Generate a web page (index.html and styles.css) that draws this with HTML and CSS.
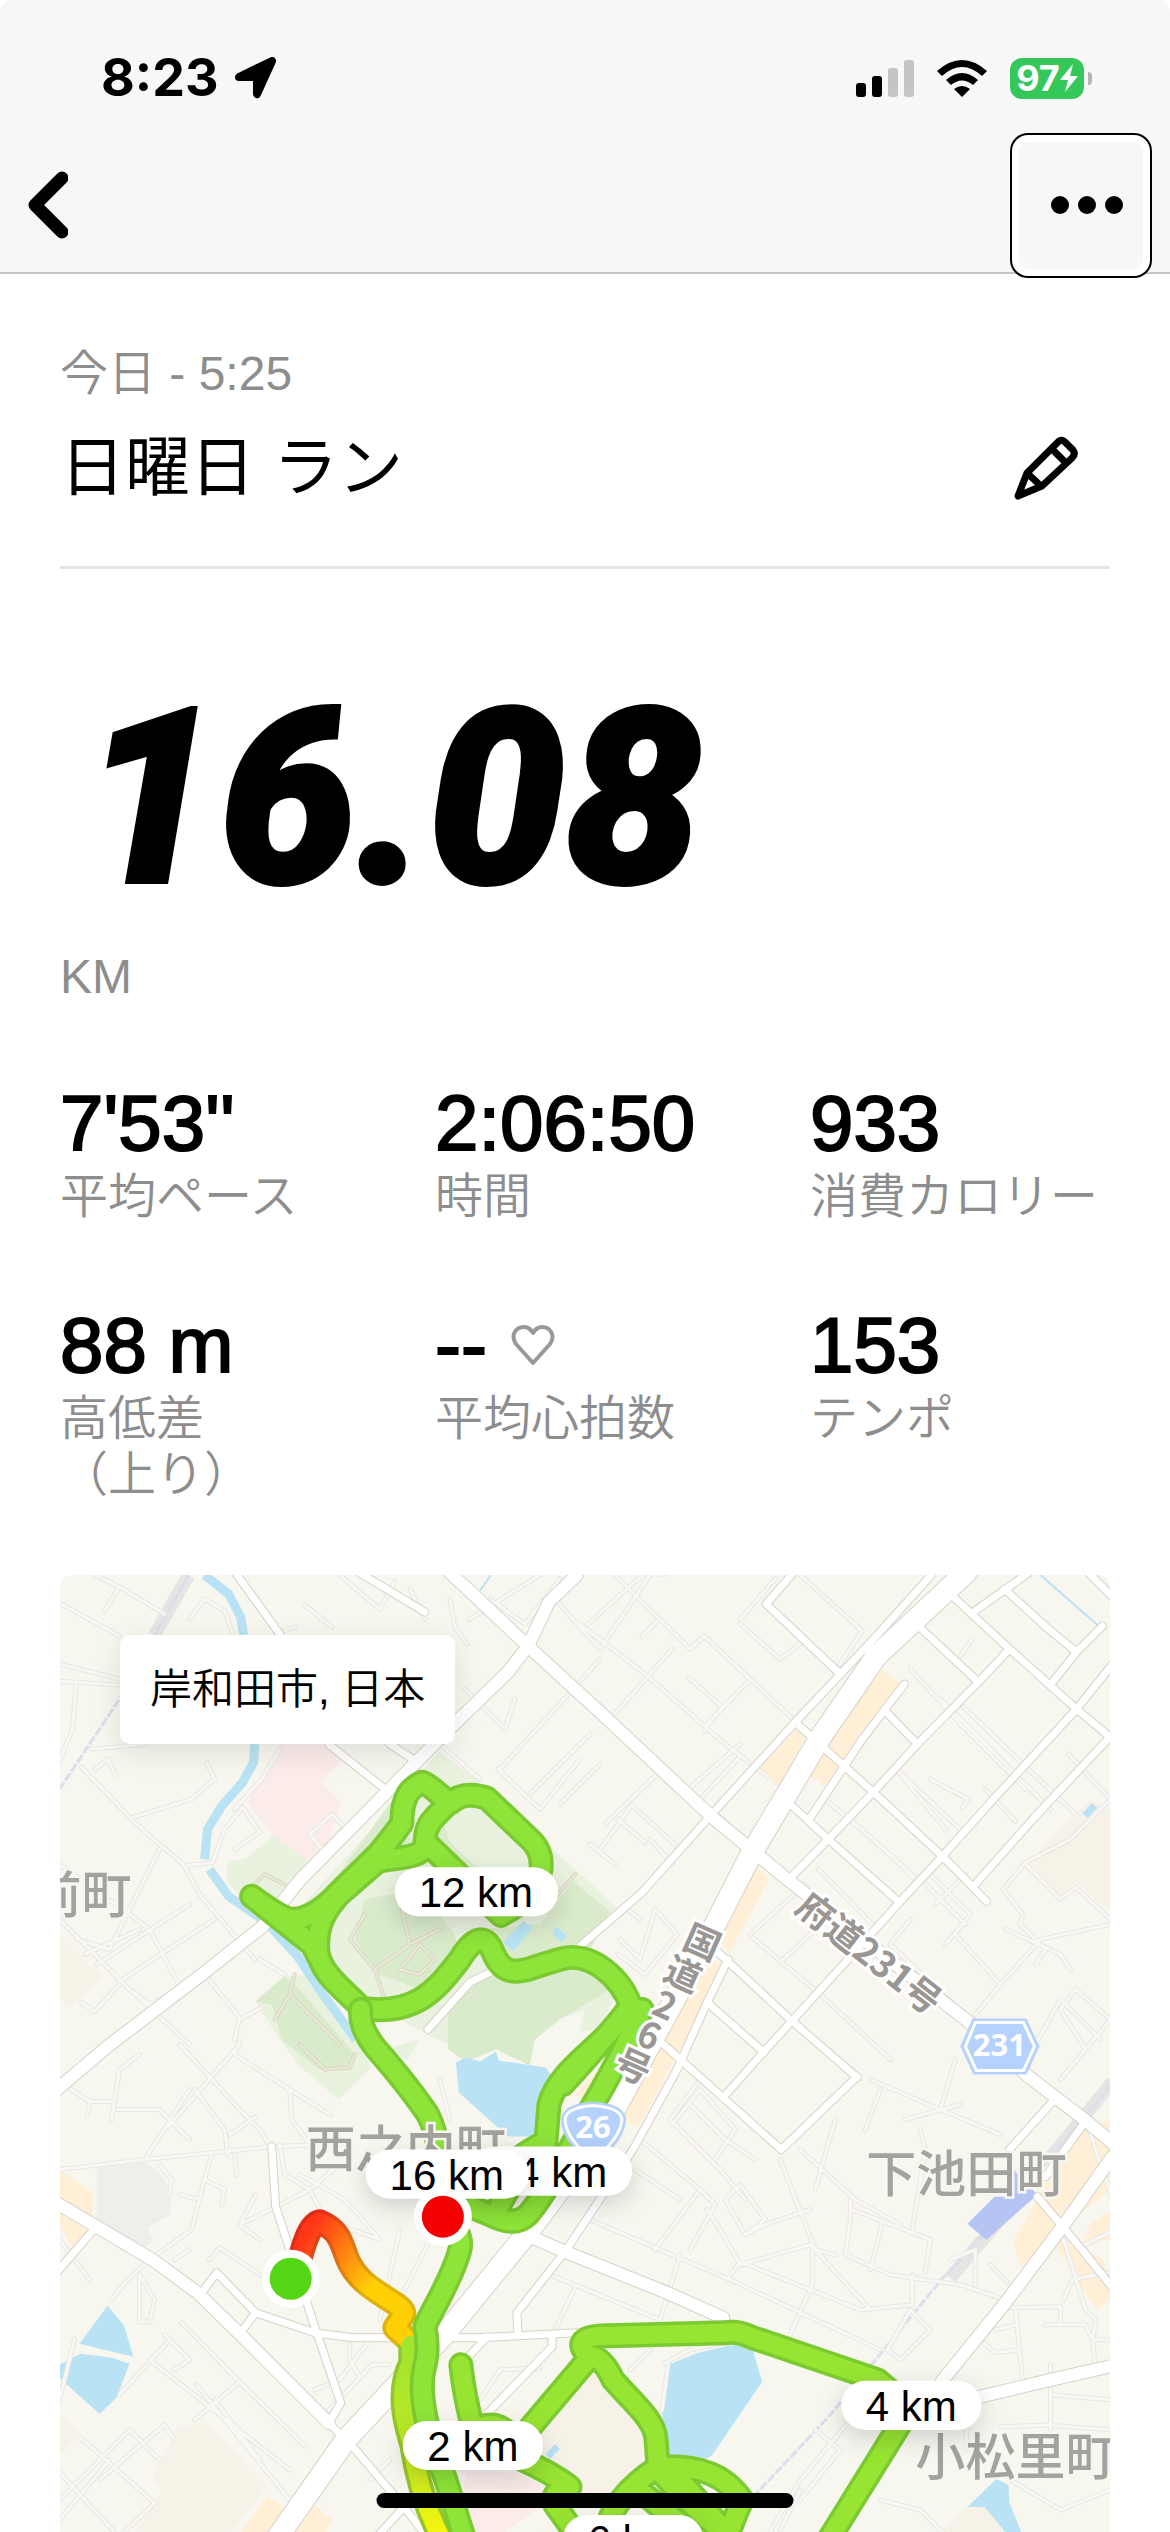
FILE: index.html
```
<!DOCTYPE html>
<html lang="ja">
<head>
  <meta charset="UTF-8">
  <meta name="viewport" content="width=device-width, initial-scale=1.0">
  <title>日曜日 ラン</title>
  <link rel="stylesheet" href="styles.css">
</head>
<body>
  <header class="header">
    <div class="status-bar">
      <div class="status-left">
        <span class="clock">8:23</span>
        <svg class="location-icon" viewBox="0 0 42 42"><path d="M4 20 L37 4 L22 37 V20 Z" fill="#000" stroke="#000" stroke-width="8" stroke-linejoin="round"/></svg>
      </div>
      <div class="status-right">
        <svg class="signal-icon" viewBox="0 0 58 38">
          <rect x="0" y="24" width="10" height="14" rx="3"/>
          <rect x="16" y="17" width="10" height="21" rx="3"/>
          <rect x="32" y="9" width="10" height="29" rx="3" fill="#c5c5c5"/>
          <rect x="48" y="1" width="10" height="37" rx="3" fill="#c5c5c5"/>
        </svg>
        <svg class="wifi-icon" viewBox="0 0 50 38">
          <path d="M0 12 Q25 -10 50 12 L45 17 Q25 -1 5 17 Z"/>
          <path d="M9 21 Q25 7 41 21 L36 26 Q25 17 14 26 Z"/>
          <path d="M17 30 Q25 24 33 30 L25 38 Z"/>
        </svg>
        <div class="battery">
          <span class="battery-level">97<svg class="bolt-icon" viewBox="0 0 18 28"><path d="M13 0 L0 16 H8 L5 28 L18 12 H10 Z" fill="#fff"/></svg></span>
          <span class="battery-cap"></span>
        </div>
      </div>
    </div>
    <div class="nav-bar">
      <button class="back-button" type="button" aria-label="戻る">
        <svg class="back-icon" viewBox="0 0 40 68"><path d="M34 7 L7 34 L34 61" fill="none" stroke="#000" stroke-width="13" stroke-linecap="round" stroke-linejoin="round"/></svg>
      </button>
      <button class="menu-button" type="button" aria-label="メニュー">
        <span class="dot"></span><span class="dot"></span><span class="dot"></span>
      </button>
    </div>
  </header>

  <main class="content">
    <p class="date">今日 - 5:25</p>
    <div class="title-row">
      <h1>日曜日 ラン</h1>
      <button class="edit-button" type="button" aria-label="編集">
        <svg class="edit-icon" viewBox="0 0 64 64" fill="none" stroke="#000" stroke-width="7" stroke-linejoin="round"><path d="M4 60 L13 37 L43 7 Q47 2 51 6 L59 14 Q62 18 58 22 L28 50 Z M13 37 L27 50 M38 13 L52 27"/></svg>
      </button>
    </div>

    <div class="distance">16.08</div>
    <p class="unit">KM</p>

    <dl class="stats">
      <div class="stat"><dd>7'53''</dd><dt>平均ペース</dt></div>
      <div class="stat"><dd>2:06:50</dd><dt>時間</dt></div>
      <div class="stat"><dd>933</dd><dt>消費カロリー</dt></div>
      <div class="stat"><dd>88 m</dd><dt>高低差<br>（上り）</dt></div>
      <div class="stat"><dd>--<svg class="heart-icon" viewBox="0 0 44 42"><path d="M22 39 L5 20 C-1 11 5 3 13 3 C18 3 20 6 22 9 C24 6 26 3 31 3 C39 3 45 11 39 20 Z" fill="none" stroke="#999" stroke-width="4" stroke-linejoin="round"/></svg></dd><dt>平均心拍数</dt></div>
      <div class="stat"><dd>153</dd><dt>テンポ</dt></div>
    </dl>

    <section class="map">
      <svg class="map-canvas" viewBox="60 1576 1050 956" preserveAspectRatio="xMidYMin slice">
        <defs>
          <linearGradient id="warmup" gradientUnits="userSpaceOnUse" x1="304" y1="2240" x2="372" y2="2285">
            <stop offset="0" stop-color="#ff3518"/>
            <stop offset="0.55" stop-color="#ff8a10"/>
            <stop offset="1" stop-color="#ffd006"/>
          </linearGradient>
          <linearGradient id="warmupEdge" gradientUnits="userSpaceOnUse" x1="304" y1="2240" x2="372" y2="2285">
            <stop offset="0" stop-color="#e02b18"/>
            <stop offset="0.55" stop-color="#dc7a14"/>
            <stop offset="1" stop-color="#dfb20c"/>
          </linearGradient>
          <linearGradient id="early" gradientUnits="userSpaceOnUse" x1="0" y1="2350" x2="0" y2="2532">
            <stop offset="0" stop-color="#a2e52e"/>
            <stop offset="0.6" stop-color="#c0e924"/>
            <stop offset="1" stop-color="#f6f50e"/>
          </linearGradient>

          <path id="trunk" d="M966 1573 L876 1657 L821 1737 L752 1853 L711 1933 L650 2045 L601 2135 L530 2230 L446 2333 L346 2440 L276 2540"/>
          <g id="main-roads">
            <path d="M446 1570 L473 1595 L528 1647 L600 1713 L711 1817 L787 1880 L969 2023 L1028 2077 L1084 2120 L1115 2146"/>
            <path d="M577 1576 L549 1603 L528 1647 L508 1673 L439 1740 L301 1880 L263 1927 L205 1973 L108 2047 L55 2092"/>
            <path d="M55 2202 L153 2260 L198 2293 L243 2337 L329 2423"/>
            <path d="M533 2238 L565 2252 L667 2293 L723 2318"/>
            <path d="M1112 2157 L1062 2227 L1005 2303 L941 2382 M979 2397 L1050 2380 L1112 2366"/>
          </g>
          <g id="mid-roads">
            <path d="M236 1574 L280 1635 M329 1745 L389 1793 M360 1574 L425 1613 M390 1745 L416 1762"/>
            <path d="M931 1576 L876 1637 L795 1723 L709 1818 L642 1893 L580 1947 M490 1973 L470 1983 L428 2030"/>
            <path d="M793 1574 L766 1605 L838 1673 M952 1597 L1007 1648 L1076 1710 L1112 1740 M919 1628 L978 1683"/>
            <path d="M1009 1650 L978 1683 L917 1745 L873 1793 L828 1840 L787 1882 M886 1713 L917 1745 M795 1723 L873 1793 L942 1857 L962 1877 L986 1902"/>
            <path d="M788 1803 L828 1840 L899 1903 M904 1685 L862 1740 L842 1770 L809 1820"/>
            <path d="M1112 1665 L1076 1710 L993 1800 L942 1857 L899 1903 L866 1940 L763 2053 L723 2098"/>
            <path d="M1112 1735 L1035 1817 L973 1887 M1028 1574 L973 1613 M1004 1590 L1048 1630 L1076 1653 L1102 1627 M1076 1653 L1052 1683 M1088 1574 L1112 1598"/>
            <path d="M718 1953 L790 2020 L857 2078 M707 2003 L764 2053 M661 2043 L723 2098 L781 2150 L857 2077"/>
            <path d="M728 1960 L707 2003 L677 2070 L633 2150 L565 2252 L517 2313 L518 2333"/>
            <path d="M94 2230 L58 2272 M272 2147 L276 2207 L291 2253 L315 2327 L341 2403 L329 2423 L356 2450 L404 2507 L430 2540"/>
            <path d="M200 2296 L217 2273 L256 2313 L315 2333 L353 2338 L477 2338 L577 2333 M243 2330 L256 2313"/>
            <path d="M487 2337 L463 2363 M552 2336 L552 2347 L488 2413 M404 2507 L378 2536"/>
            <path d="M1037 2197 L1084 2253 L1112 2288 M1054 2100 L1009 2150 M1084 2123 L1045 2177"/>
          </g>
          <g id="streets">
            <path d="M60 1604 L120 1637 M95 1576 L120 1588 L165 1615 M120 1588 L105 1612 M60 1665 L120 1680 M60 1682 L120 1686 M77 1683 L73 1730 L60 1762 M92 1750 L145 1745 M82 1768 L134 1822 L160 1845 L184 1865 L200 1895 L255 1960"/>
            <path d="M134 1818 L192 1800 L215 1780 L207 1763 M96 1770 L108 1760 L117 1778 M184 1867 L213 1863 M60 1865 L130 1915 L150 1930 L182 1990 M78 1940 L110 1950 L160 1850 M85 1955 L140 1930 M97 1965 L190 1905 M120 1982 L215 1920 M60 1920 L130 1990 L190 2045"/>
            <path d="M205 1975 L240 2018 L235 2040 M260 1960 L285 1975 M120 1985 L95 2012 L82 2003 M240 2020 L262 2008 M130 1990 L150 2005 L170 1995 M213 1863 L225 1830 L243 1808 L260 1833 L235 1850"/>
            <path d="M280 1750 L262 1780 L235 1810 M310 1835 L332 1815 L345 1828 L322 1850 Z M190 1620 L205 1600 L225 1612 L235 1640 M276 1635 L295 1628 M305 1606 L332 1628 M340 1576 L380 1610 L395 1583"/>
            <path d="M410 1590 L425 1620 M450 1600 L455 1628 L467 1645 M470 1620 L540 1576 M490 1600 L525 1625 L560 1580 M555 1600 L600 1650 L650 1576 M465 1690 L505 1730 L515 1700 M500 1770 L555 1710 L600 1660 M440 1745 L480 1780 M498 1770 L540 1810 L580 1760 M530 1795 L590 1735 M560 1805 L600 1765"/>
            <path d="M615 1576 L690 1650 L704 1637 L796 1723 M660 1576 L690 1568 M580 1625 L645 1675 L725 1745 L768 1778 M588 1625 L660 1560 M657 1622 L642 1637 M610 1720 L672 1650 M705 1727 L750 1680 L748 1678 M688 1678 L722 1708 L704 1732 M740 1625 L780 1660 L800 1645 M800 1576 L862 1632 L836 1670 M740 1620 L775 1580"/>
            <path d="M688 1790 L740 1745 M700 1800 L740 1757 M657 1775 L605 1825 M618 1820 L645 1843 M650 1840 L673 1865 M600 1850 L632 1806 L680 1850 M590 1845 L615 1865 M940 1700 L1045 1805 M963 1708 L1075 1815 M910 1670 L960 1725 L1025 1790 M896 1770 L965 1835 M850 1820 L920 1883 M945 1830 L900 1775 M985 1790 L1015 1822 M1030 1790 L1050 1810"/>
            <path d="M930 1780 L968 1800 L962 1808 M825 1800 L890 1855 L915 1880 M818 1870 L872 1925 M960 1657 L972 1640 M1068 1755 L1110 1800 L1070 1840 L1025 1863 L1003 1890 L1022 1915 L1020 1925 L1045 1950 L1035 1965 M1025 1865 L1060 1900 L1075 1888 L1110 1920 M930 1875 L970 1915 L945 1945 M925 1885 L965 1925 M935 1905 L965 1875"/>
            <path d="M750 1935 L805 1885 M752 1938 L820 1995 M780 1963 L815 1930 M820 1995 L890 2060 M910 1920 L890 1945 L990 2040 M955 1935 L1000 1985 L975 2015 M1000 1985 L1040 1940 L1110 1925 M1005 1930 L1060 1955 L1070 1970 M1035 2045 L1060 2000 L1100 2040 M1085 2050 L1060 2010 L1075 1990 L1110 2020 M1060 2080 L1110 2020"/>
            <path d="M620 1940 L640 1960 L655 1910 L677 1935 L645 1975 L618 1955 M625 1908 L640 1920 M700 2080 L670 2120 L720 2170 L745 2200 M690 2105 L725 2140 L755 2160 M672 2125 L700 2090 L735 2130 L715 2160 M780 2160 L815 2250 L835 2255 M800 2150 L855 2200 L900 2225"/>
            <path d="M835 2120 L815 2190 M870 2080 L940 2110 L1000 2135 M905 2120 L960 2105 M880 2090 L865 2130 M940 2110 L955 2060 M920 2130 L925 2150 L912 2230 M850 2200 L850 2220 L845 2255 L890 2275 L960 2285 L1005 2300 M852 2210 L930 2240 L925 2272 M882 2223 L870 2270 M912 2275 L912 2305 L862 2310"/>
            <path d="M640 2140 L700 2190 L715 2205 L690 2250 M635 2170 L680 2200 M700 2190 L655 2250 M590 2220 L730 2280 L880 2350 M550 2275 L660 2320 M740 2265 L720 2230 L707 2210 M740 2265 L810 2245 L870 2310 M727 2280 L740 2262 L860 2310 M680 2255 L660 2320 M812 2250 L812 2285 L790 2335 M745 2235 L725 2200 L740 2185 L765 2220 L745 2235 L765 2225 L810 2210"/>
            <path d="M575 2288 L555 2330 M665 2363 L690 2350 L740 2340 M668 2365 L662 2410 M650 2350 L630 2370 M950 2260 L975 2250 L975 2285 M990 2265 L1007 2283 M1005 2308 L1060 2307 L1060 2325 M1015 2308 L1022 2380 M995 2330 L1015 2325 M980 2340 L995 2353 L1018 2350 M1063 2300 L1072 2280 L1110 2272 M1045 2325 L1085 2325 L1092 2340 L1110 2340 M1092 2340 L1095 2370 M1060 2230 L1085 2310 L1095 2320 L1092 2340"/>
            <path d="M1085 2120 L1112 2200 M1110 2232 L1085 2245 M1050 2365 L1050 2430 M1050 2395 L1110 2400 M1000 2427 L1045 2425 L1110 2430 M965 2420 L967 2450 M850 2420 L800 2480 L770 2532 M815 2430 L840 2450 L800 2500 M910 2310 L930 2330 L900 2360 L887 2350 Z M1010 2480 L1060 2510 L1110 2490 M880 2500 L920 2510 L950 2540 M780 2530 L800 2490"/>
            <path d="M60 2082 L90 2102 L115 2102 L120 2070 L140 2055 M90 2102 L88 2115 M115 2102 L112 2120 M118 2110 L160 2110 L190 2140 M180 2045 L240 2110 L260 2130 L272 2150 M240 2042 L235 2055 L290 2090 L330 2115 M290 2090 L292 2120 L310 2145 M168 2128 L240 2045 M230 2135 L255 2118 M195 2090 L225 2130 L228 2155"/>
            <path d="M60 2170 L145 2160 L272 2147 L330 2145 M145 2160 L190 2090 M160 2165 L172 2180 L170 2195 M212 2155 L205 2180 L192 2230 L150 2260 M180 2195 L200 2200 M235 2155 L237 2175 M205 2180 L225 2190 L222 2205 M280 2145 L285 2175 L310 2190 L340 2165 M310 2190 L280 2205 L240 2225 L260 2240 M256 2195 L240 2225 M310 2190 L325 2220 L380 2240 L345 2200 L300 2175"/>
            <path d="M60 2400 L75 2340 M60 2240 L90 2280 M145 2265 L128 2280 L112 2300 M175 2260 L190 2250 M210 2260 L220 2248 L260 2275 M140 2275 L155 2300 L150 2322 L140 2322 Z M182 2323 L240 2382 L305 2446 M170 2340 L120 2395 M150 2360 L290 2470 M165 2335 L190 2360 L175 2370 M240 2382 L195 2420 M215 2400 L260 2460 M197 2385 L290 2500 M60 2500 L130 2430 L160 2460"/>
            <path d="M60 2472 L115 2532 M80 2437 L155 2503 L125 2532 M100 2480 L165 2425 L175 2440 M60 2520 L110 2460 M315 2390 L340 2380 L370 2340 M350 2345 L350 2360 L360 2378 L320 2420 M390 2365 L372 2365 L360 2378 M370 2480 L390 2460 M440 2080 L450 2120 M400 2230 L380 2320 M430 2240 L400 2300 M480 2400 L500 2370 L540 2368"/>
          </g>
          <path id="footpaths" d="M345 1880 L400 1820 M330 1895 L385 1830 M365 1915 L350 1940 L375 1970 L385 2000 M375 1970 L410 1945 L400 1900 M410 1945 L440 1930 M400 1970 L420 1945 L435 1960 L420 1975 Z M275 2020 L290 1995 L340 2045 M290 1995 L295 1975 M300 2045 L325 2070 L350 2068 L355 2055 M545 1910 L575 1875 M240 1900 L265 1875 L290 1888"/>
          <path id="route-main" d="M252 1897 C268 1908 280 1918 292 1920 C310 1920 325 1908 340 1892 L378 1855 Q392 1838 402 1824 C402 1795 412 1788 422 1783 C430 1785 440 1797 450 1803 C430 1822 425 1825 425 1848 C418 1860 395 1858 378 1862 L340 1895 C325 1912 317 1925 318 1950 C320 1975 345 1990 362 2009 C420 2017 440 1985 460 1960 C475 1935 487 1935 494 1955 C508 1985 530 1967 560 1960 C590 1950 622 1980 630 2005 C610 2045 560 2065 549 2105 L546 2142 Q520 2155 505 2170 M452 1803 C462 1793 478 1796 487 1799 L530 1840 Q543 1852 541 1870 C538 1895 520 1905 501 1916 L428 1845 M252 1897 L312 1945 L320 1960 M642 2010 L628 2010 Q600 2045 563 2085 M642 2010 Q620 2060 590 2110 C570 2150 545 2195 528 2215 Q515 2228 490 2215 L473 2208 M500 2205 L520 2170"/>
          <path id="route-south" d="M361 2010 Q359 2028 377 2050 Q410 2088 428 2115 Q442 2140 445 2217 Q464 2235 460 2250 C452 2280 432 2310 425 2327 Q430 2350 424 2370 C418 2400 430 2440 446 2480 L465 2540"/>
          <path id="route-east" d="M461 2365 Q464 2395 474 2432 M474 2432 Q495 2415 515 2440 M825 2545 L910 2408 L877 2380 L750 2337 Q738 2331 725 2333 L610 2336 C580 2335 575 2345 590 2357 L530 2428 M594 2357 Q605 2362 613 2380 C635 2405 655 2420 656 2440 L658 2467 Q610 2498 603 2540 M658 2467 C700 2465 725 2475 742 2500 Q735 2515 728 2535 L680 2480 M658 2470 Q690 2505 722 2532 M645 2495 L700 2540 M523 2460 Q555 2475 570 2487 Q550 2490 555 2505 L580 2540"/>
          <path id="route-early" d="M411 2345 L411 2363 C395 2395 408 2430 412 2445 Q420 2500 445 2545"/>
          <path id="route-start" d="M298 2270 Q307 2225 320 2222 C350 2235 338 2255 360 2278 C375 2295 405 2305 404 2314 L395 2328 L408 2340"/>
        </defs>

        <rect x="60" y="1576" width="1050" height="956" fill="#f7f6ef"/>

        <!-- land use -->
        <g fill="#f6f2e8">
          <path d="M177 2428 L205 2423 L267 2487 L232 2532 L136 2532 L163 2490 L153 2478 Z M1090 1800 L1110 1812 L1110 1912 L1076 1883 L1060 1897 L1028 1863 Z"/>
          <path d="M593 2372 L645 2425 L645 2460 L605 2500 L580 2490 L540 2460 L542 2435 Z M60 2413 L80 2435 L60 2455 Z M60 1937 L103 1977 L72 2007 L60 2000 Z M940 2532 L967 2507 L984 2507 L1005 2532 Z"/>
        </g>
        <g fill="#feefd6">
          <path d="M60 2170 L93 2193 L93 2227 L74 2250 L60 2225 Z M882 1670 L899 1684 L843 1762 L826 1743 Z M796 1730 L806 1737 L778 1788 L758 1770 Z M821 1752 L838 1767 L825 1787 L809 1777 Z"/>
          <path d="M754 1865 L769 1880 L738 1937 L728 1955 L716 1930 Z M702 1960 L723 1963 L680 2050 L638 2128 L575 2095 Z M268 2496 L287 2510 L273 2532 L241 2532 Z M315 2505 L333 2520 L325 2532 L295 2532 Z"/>
          <path d="M1084 2128 L1110 2120 L1110 2190 L1063 2227 L1084 2250 L1103 2260 L1110 2298 L1097 2310 L1084 2293 L1056 2247 L1022 2270 L1013 2243 L1037 2197 Z M1090 2225 L1110 2210 L1110 2240 L1080 2245 Z"/>
        </g>
        <path d="M97 2167 L146 2163 L160 2173 L172 2193 L170 2215 L148 2228 L154 2242 L141 2248 L97 2227 Z" fill="#eeefea"/>
        <path d="M280 1745 L329 1745 L345 1758 L321 1783 L341 1803 L320 1870 L311 1863 L273 1836 L248 1803 Z M466 2470 L515 2473 L559 2493 L505 2532 L460 2532 Z" fill="#fbecea"/>
        <g fill="#e9f1df">
          <path d="M439 1752 L480 1783 L620 1911 L580 1950 L620 1985 L600 2030 L448 2045 L380 2010 L300 1950 L290 1920 L390 1810 Z"/>
          <path d="M284 1977 L315 1975 L372 2067 L339 2100 L301 2068 L280 2040 L256 2002 Z M228 1862 L246 1860 L273 1836 L311 1863 L280 1903 L250 1907 L228 1883 Z M420 2040 L408 2060 L385 2050 Z"/>
        </g>
        <g fill="#d9ebcb">
          <path d="M391 1803 L425 1865 L360 1870 L312 1912 Z M365 1900 L420 1890 L455 1935 L460 1965 L420 1990 L380 1975 L355 1940 Z M435 1795 L450 1843 L490 1880 L440 1850 Z"/>
          <path d="M573 1882 L611 1913 L590 1950 L545 1965 L510 1960 L480 1930 L540 1925 Z M484 1977 L448 2012 L448 2050 L466 2062 L496 2050 L530 2066 L535 2040 L560 2020 L610 1990 L590 1960 L520 1975 Z"/>
          <path d="M284 1977 L256 2002 L272 2005 L282 2040 L320 2070 L350 2065 L355 2055 L300 1990 Z"/>
        </g>
        <path d="M535 2040 L560 2020 L585 2010 L575 2050 L545 2068 L530 2066 Z" fill="#f7f6ef"/>

        <!-- water -->
        <g fill="#b9e3f4">
          <path d="M456 2063 L466 2058 L480 2062 L496 2052 L499 2061 L546 2068 L552 2077 L539 2137 L508 2137 L459 2093 Z"/>
          <path d="M108 2306 L124 2325 L134 2357 L80 2344 Z M60 2365 L81 2354 L113 2358 L130 2364 L117 2398 L100 2414 L60 2378 Z"/>
          <path d="M668 2365 L698 2353 L737 2344 L752 2348 L762 2382 L712 2455 L697 2465 L670 2463 L662 2413 Z"/>
          <path d="M996 2479 L1008 2485 L1009 2503 L1021 2532 L1005 2532 L984 2507 L967 2507 Z M1091 1804 L1097 1808 L1087 1819 L1082 1814 Z M523 1922 L533 1928 L513 1952 L503 1943 Z M555 1927 L567 1936 L561 1943 L553 1935 Z M555 2444 L560 2449 L550 2459 L546 2454 Z"/>
        </g>
        <path d="M205 1576 L229 1595 L241 1618 L244 1636 M255 1745 L254 1763 L243 1783 L222 1807 L208 1830 L205 1860 M210 1870 L229 1897 L267 1923 L298 1957 L322 1993 L356 2040" fill="none" stroke="#b9e3f4" stroke-width="9"/>
        <path d="M491 1576 L480 1592 M1040 1576 L1098 1627" fill="none" stroke="#b9e3f4" stroke-width="2"/>

        <!-- railways and station -->
        <path d="M189 1576 L155 1636 M1112 2082 L1050 2158 M1025 2190 L950 2278" fill="none" stroke="#e5e5e3" stroke-width="13"/>
        <path class="rail" d="M189 1576 L155 1636 L120 1700 L60 1790 M1112 2084 L1013 2203 L941 2280 L830 2415 L753 2497 L722 2534"/>
        <path d="M1013 2170 L1037 2195 L986 2240 L967 2224 L994 2197 L1013 2197 Z" fill="#b6c4f4"/>

        <!-- roads -->
        <use href="#streets" class="street-edge"/>
        <use href="#streets" class="street"/>
        <use href="#footpaths" class="footpath-edge"/>
        <use href="#footpaths" class="footpath"/>
        <use href="#mid-roads" class="mid-edge"/>
        <use href="#main-roads" class="main-edge"/>
        <use href="#trunk" class="trunk-edge"/>
        <use href="#mid-roads" class="mid"/>
        <use href="#main-roads" class="main"/>
        <use href="#trunk" class="trunk"/>

        <!-- route -->
        <g class="route-edge">
          <use href="#route-start" stroke="url(#warmupEdge)"/>
          <use href="#route-early" stroke="#93c52c"/>
          <use href="#route-main"/>
          <use href="#route-east"/>
        </g>
        <g class="route-line">
          <use href="#route-start" stroke="url(#warmup)"/>
          <use href="#route-early" stroke="url(#early)"/>
          <use href="#route-main"/>
          <use href="#route-east" stroke="#97e433"/>
        </g>
        <use href="#route-south" class="route-edge"/>
        <use href="#route-south" class="route-line"/>

        <!-- place names -->
        <g class="place">
          <text x="32" y="1914">前町</text>
          <text x="306" y="2167">西之内町</text>
          <text x="866" y="2192">下池田町</text>
          <text x="915" y="2475">小松里町</text>
        </g>
        <g class="road-name">
          <text transform="translate(702 1943) rotate(24)" y="13">国</text>
          <text transform="translate(683 1975) rotate(24)" y="13">道</text>
          <text transform="translate(665 2006) rotate(24)" y="13">2</text>
          <text transform="translate(649 2036) rotate(24)" y="13">6</text>
          <text transform="translate(633 2067) rotate(24)" y="13">号</text>
          <text transform="translate(869 1954) rotate(38)" y="13">府道231号</text>
        </g>
        <g class="shield">
          <path d="M972 2019 H1026 L1039 2047 L1026 2075 H973 L960 2047 Z"/>
          <path class="shield-line" d="M975 2023 H1023 L1034 2047 L1023 2071 H976 L965 2047 Z"/>
          <text x="999" y="2057">231</text>
          <path d="M561 2120 Q562 2104 593 2102 Q625 2104 626 2120 Q625 2140 600 2160 H586 Q561 2140 561 2120 Z"/>
          <path class="shield-line" d="M565 2120 Q566 2108 593 2106 Q621 2108 622 2120 Q620 2138 598 2156 H588 Q566 2138 565 2120 Z"/>
          <text x="593" y="2138">26</text>
        </g>

        <!-- distance markers -->
        <g class="marker">
          <rect x="395" y="1868" width="163" height="49" rx="24"/><text x="476" y="1908">12 km</text>
          <rect x="469" y="2147" width="163" height="49" rx="24"/><text x="550" y="2187">14 km</text>
          <rect x="366" y="2150" width="163" height="49" rx="24"/><text x="447" y="2190">16 km</text>
          <rect x="841" y="2381" width="140" height="49" rx="24"/><text x="911" y="2421">4 km</text>
          <rect x="403" y="2421" width="140" height="49" rx="24"/><text x="473" y="2461">2 km</text>
          <rect x="563" y="2515" width="140" height="49" rx="24"/><text x="633" y="2555">6 km</text>
        </g>
        <circle cx="291" cy="2279" r="29" fill="#fff"/><circle cx="291" cy="2279" r="21" fill="#54d614"/>
        <circle cx="443" cy="2217" r="29" fill="#fff"/><circle cx="443" cy="2217" r="21" fill="#f40000"/>
      </svg>
      <div class="place-chip">岸和田市, 日本</div>
    </section>
  </main>
  <div class="home-indicator"></div>
</body>
</html>
```

FILE: styles.css
```
* {
  box-sizing: border-box;
}

body {
  margin: 0;
  min-height: 100vh;
  display: flex;
  flex-direction: column;
  overflow: hidden;
  background-color: #ffffff;
  color: #000000;
  font-family: "Liberation Sans", "Noto Sans CJK JP", sans-serif;
}

p, h1, dl, dd, dt {
  margin: 0;
  font-weight: normal;
}

button {
  padding: 0;
  border: none;
  background: none;
  cursor: pointer;
}

svg {
  display: block;
}

/* header */
.header {
  background-color: #f7f7f7;
  border-bottom: 2px solid #c4c4c4;
  border-radius: 12px 12px 0 0;
}

.status-bar {
  display: flex;
  justify-content: space-between;
  height: 132px;
  padding: 48px 78px 0 101px;
}

.status-left,
.status-right {
  display: flex;
  align-items: center;
  height: 60px;
}

.status-left {
  gap: 16px;
}

.status-right {
  gap: 23px;
}

.clock {
  font: bold 52px/60px Inter, sans-serif;
}

.location-icon {
  width: 42px;
  height: 42px;
}

.signal-icon {
  width: 58px;
  height: 38px;
}

.wifi-icon {
  width: 50px;
  height: 38px;
}

.battery {
  display: flex;
  align-items: center;
  gap: 4px;
}

.battery-level {
  display: flex;
  align-items: center;
  justify-content: center;
  width: 74px;
  height: 41px;
  border-radius: 12px;
  background-color: #35c759;
  color: #ffffff;
  font: bold 36px/41px Inter, sans-serif;
}

.battery-cap {
  width: 4px;
  height: 13px;
  border-radius: 0 4px 4px 0;
  background-color: #b5b5b5;
}

.bolt-icon {
  width: 18px;
  height: 28px;
}

.nav-bar {
  display: flex;
  justify-content: space-between;
  align-items: center;
  height: 140px;
  padding: 6px 18px 0 28px;
}

.back-icon {
  width: 40px;
  height: 68px;
}

.menu-button {
  display: flex;
  flex-shrink: 0;
  align-items: center;
  justify-content: center;
  gap: 9px;
  width: 142px;
  height: 145px;
  padding-left: 12px;
  border: 2px solid #000000;
  border-radius: 18px;
  background-color: #f7f7f7;
  box-shadow: inset 0 0 0 7px #ffffff;
}

.dot {
  width: 18px;
  height: 18px;
  border-radius: 50%;
  background-color: #000000;
}

/* run summary */
.content {
  flex: 1;
  display: flex;
  flex-direction: column;
  padding: 64px 60px 0;
}

.date,
.unit,
.stat dt {
  color: #8d8d8d;
  font-size: 48px;
  font-weight: 350;
  line-height: 56px;
}

.date {
  padding-top: 8px;
}

.title-row {
  display: flex;
  justify-content: space-between;
  align-items: center;
  height: 167px;
  padding: 0 32px 32px 0;
  border-bottom: 3px solid #e5e5e5;
}

.title-row h1 {
  font-size: 65px;
  line-height: 80px;
}

.edit-icon {
  width: 64px;
  height: 64px;
}

.distance {
  margin-top: 100px;
  padding-left: 22px;
  font: italic 900 244px/260px Roboto, sans-serif;
  -webkit-text-stroke: 4px #000000;
}

.unit {
  margin-top: 20px;
}

.stats {
  display: grid;
  grid-template-columns: repeat(3, 1fr);
  gap: 74px 75px;
  margin-top: 72px;
}

.stat {
  display: flex;
  flex-direction: column;
}

.stat dd {
  display: flex;
  align-items: center;
  font-size: 78px;
  line-height: 92px;
  white-space: nowrap;
  -webkit-text-stroke: 2px #000000;
}

.stat dt {
  white-space: nowrap;
}

.heart-icon {
  width: 44px;
  height: 42px;
  margin-left: 24px;
}

/* map */
.map {
  position: relative;
  flex: 1;
  min-height: 900px;
  margin-top: 72px;
  border-radius: 12px 12px 0 0;
  overflow: hidden;
  background-color: #f7f6ef;
}

.map-canvas {
  position: absolute;
  width: 100%;
  height: 100%;
}

.map-canvas use {
  fill: none;
  stroke-linejoin: round;
  stroke-linecap: round;
}

.street-edge {
  stroke: #e9e7e2;
  stroke-width: 5px;
}

.street {
  stroke: #f8f7f4;
  stroke-width: 3px;
}

.footpath-edge {
  stroke: #dcd5c0;
  stroke-width: 4px;
}

.footpath {
  stroke: #e6ecd8;
  stroke-width: 2px;
}

.mid-edge {
  stroke: #d6d2ca;
  stroke-width: 9px;
}

.mid {
  stroke: #ffffff;
  stroke-width: 7px;
}

.main-edge {
  stroke: #d6d2ca;
  stroke-width: 14px;
}

.main {
  stroke: #ffffff;
  stroke-width: 12px;
}

.trunk-edge {
  stroke: #d6d2ca;
  stroke-width: 23px;
}

.trunk {
  stroke: #ffffff;
  stroke-width: 21px;
}

.rail {
  fill: none;
  stroke: #dcdded;
  stroke-width: 3px;
  stroke-dasharray: 9px 2px;
}

.route-edge {
  stroke: #7bca31;
  stroke-width: 25px;
}

.route-line {
  stroke: #8ee439;
  stroke-width: 18px;
}

.place {
  fill: #a3a29e;
  stroke: #f7f6ef;
  stroke-width: 5px;
  paint-order: stroke;
  font: 500 50px "Noto Sans CJK JP", sans-serif;
}

.road-name {
  fill: #999693;
  stroke: #ffffff;
  stroke-width: 6px;
  paint-order: stroke;
  text-anchor: middle;
  font: bold 36px "Noto Sans CJK JP", sans-serif;
}

.shield {
  fill: #b5d1fe;
  text-anchor: middle;
  font: bold 31px "Noto Sans", sans-serif;
}

.shield text {
  fill: #ffffff;
}

.shield-line {
  fill: none;
  stroke: #ffffff;
  stroke-width: 3px;
}

.marker {
  text-anchor: middle;
  font-size: 42px;
}

.marker rect {
  fill: #ffffff;
  filter: drop-shadow(0 8px 12px rgba(0, 0, 0, 0.15));
}

.place-chip {
  position: absolute;
  top: 60px;
  left: 60px;
  height: 109px;
  padding: 0 30px;
  border-radius: 10px;
  background-color: #ffffff;
  box-shadow: 0 8px 30px rgba(0, 0, 0, 0.1);
  font-size: 42px;
  font-weight: 350;
  line-height: 110px;
}

.home-indicator {
  position: fixed;
  bottom: 24px;
  left: 50%;
  width: 417px;
  height: 15px;
  border-radius: 8px;
  background-color: #000000;
  transform: translateX(-50%);
}
```
